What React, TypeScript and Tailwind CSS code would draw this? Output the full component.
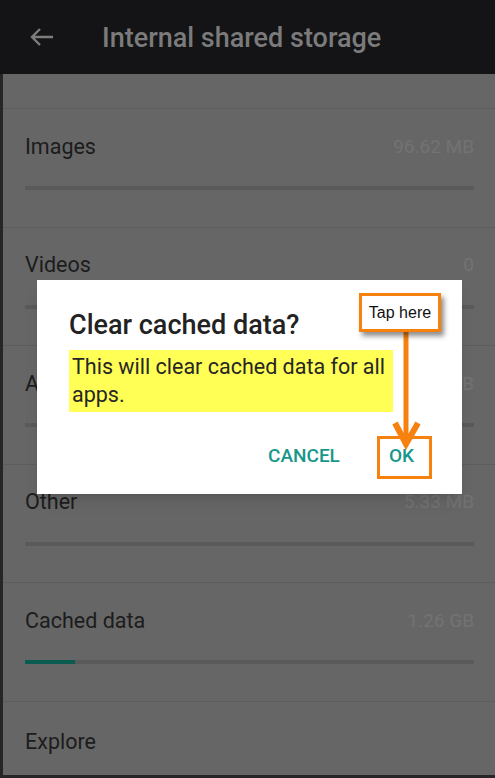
import React from 'react';

const rows = [
  { label: 'Images', value: '96.62 MB', fill: 0 },
  { label: 'Videos', value: '0', fill: 0 },
  { label: 'Audio', value: '2.13 MB', fill: 0 },
  { label: 'Other', value: '5.33 MB', fill: 0 },
  { label: 'Cached data', value: '1.26 GB', fill: 50 },
];

export default function App() {
  return (
    <div
      className="relative w-[495px] h-[778px] overflow-hidden flex flex-col bg-[#666666]"
      style={{ fontFamily: 'Roboto, "Noto Sans", sans-serif' }}
    >
      <header className="h-[74px] shrink-0 bg-[#141416] flex items-center">
        <svg width="24" height="20" viewBox="0 0 24 20" className="ml-[30px]">
          <path d="M23 10H2M10 2L2 10l8 8" fill="none" stroke="#7d7d7d" strokeWidth="2.4" />
        </svg>
        <h1 className="ml-[48px] mt-[3px] text-[27px] font-medium text-[#7b7b7b]">
          Internal shared storage
        </h1>
      </header>

      <main className="flex-1 flex flex-col border-l-[3px] border-b-[3px] border-[#262628]">
        <div className="h-[35px] shrink-0 border-b border-[#5c5c5c]" />
        {rows.map((r) => (
          <div key={r.label} className="h-[118.5px] shrink-0 border-b border-[#5c5c5c] pl-[22px] pr-[21px] pt-[24px]">
            <div className="flex items-center justify-between h-[28px]">
              <span className="text-[21.5px] text-[#1c1c1c]">{r.label}</span>
              <span className="text-[19px] text-[#737373]">{r.value}</span>
            </div>
            <div className="mt-[25px] h-[4px] bg-[#5a5a5a]">
              <div className="h-full bg-[#0b5c50]" style={{ width: r.fill }} />
            </div>
          </div>
        ))}
        <div className="flex-1 pl-[22px] pt-[24px]">
          <span className="text-[21.5px] text-[#1c1c1c]">Explore</span>
        </div>
      </main>

      <div className="absolute left-[37px] top-[280px] w-[425px] h-[214px] bg-white shadow-lg pl-[32px] pt-[28px]">
        <h2 className="text-[27px] font-medium text-[#222222] leading-[34px]">Clear cached data?</h2>
        <p className="mt-[8px] w-[324px] bg-[#ffff55] text-[21.5px] leading-[28px] text-[#262626] pl-[3px] py-[3px] whitespace-nowrap">
          This will clear cached data for all
          <br />
          apps.
        </p>
        <div className="absolute right-[48px] bottom-[24px] flex items-center gap-[49px] text-[19px] font-medium text-[#17978a]">
          <span>CANCEL</span>
          <span>OK</span>
        </div>
      </div>

      <div className="absolute left-[377px] top-[436px] w-[55px] h-[43px] border-[3px] border-[#f7810f]" />

      <svg className="absolute left-[380px] top-[328px]" width="50" height="124" viewBox="380 328 50 124">
        <path d="M406 330V441" stroke="#f7810f" strokeWidth="5" fill="none" />
        <path d="M395 423L406 444L418 423" stroke="#f7810f" strokeWidth="6" fill="none" strokeLinejoin="miter" />
      </svg>

      <div
        className="absolute left-[359px] top-[293px] w-[82px] h-[39px] bg-white border-[3px] border-[#f7810f] flex items-center justify-center shadow-[3px_4px_5px_rgba(0,0,0,0.45)] text-[16px] text-[#111111]"
        style={{ fontFamily: '"Liberation Sans", Arial, sans-serif' }}
      >
        Tap here
      </div>
    </div>
  );
}
